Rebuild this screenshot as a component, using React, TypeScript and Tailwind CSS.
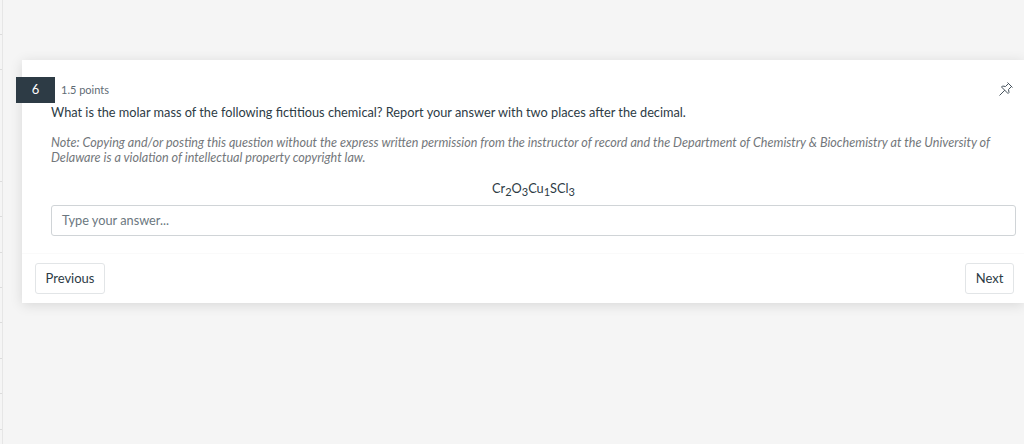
const stripRows = [35, 35, 112, 35, 36, 35, 35, 36, 35, 36]

function PinIcon() {
    return (
        <svg viewBox="0 0 16 16" fill="none" stroke="#46525c" strokeWidth="1" className="absolute right-[10px] top-[21px] h-[16px] w-[16px]">
            <path d="M9.5 1.5 14.5 6.5" />
            <path d="M10.5 2.5 7.5 5.5 4.5 5 3.5 6 10 12.5 11 11.5 10.5 8.5 13.5 5.5" />
            <path d="M6.8 9.2 1.5 14.5" />
        </svg>
    )
}

export default function App() {
    return (
        <div className="flex h-[444px] overflow-hidden bg-[#f5f5f5] font-['Lato',sans-serif] text-[#2d3b45]">
            {/* Left strip of the page behind */}
            <div className="w-[3px] shrink-0 border-r border-[#e6e6e6]">
                {stripRows.map((h, i) => (
                    <div key={i} className="border-b border-[#dcdcdc]" style={{ height: h }} />
                ))}
            </div>

            <div className="flex-1 pt-[60px] pl-[19px]">
                {/* Question card */}
                <div className="relative h-[243px] bg-white shadow-[0_2px_12px_rgba(0,0,0,0.12)]">
                    <div className="absolute left-[-6px] top-[17px] flex h-[26px] w-[39px] items-center justify-center bg-[#2d3b45] text-[13px] text-white">
                        6
                    </div>
                    <PinIcon />

                    <div className="pt-[23px] pl-[29px] pr-[8px]">
                        <div className="pl-[10px] text-[11px] leading-[14px] text-[#5f6b75]">1.5 points</div>
                        <p className="mt-[7px] text-[12.75px] leading-[16px]">
                            What is the molar mass of the following fictitious chemical? Report your answer with two places after the decimal.
                        </p>
                        <p className="mt-[15px] pr-[16px] text-[12.58px] leading-[15px] italic text-[#73777b]">
                            Note: Copying and/or posting this question without the express written permission from the instructor of record and the Department of Chemistry &amp; Biochemistry at the University of Delaware is a violation of intellectual property copyright law.
                        </p>
                        <p className="mt-[14px] text-center text-[12.75px] leading-[18px] text-[#2d3b45]">
                            Cr<sub className="text-[11px]">2</sub>O<sub className="text-[11px]">3</sub>Cu<sub className="text-[11px]">1</sub>SCl<sub className="text-[11px]">3</sub>
                        </p>
                        <div className="mt-[8px] flex h-[31px] items-center rounded-[3px] border border-[#d0d4d7] px-[10px] text-[12.75px] text-[#6b7780]">
                            Type your answer...
                        </div>
                    </div>

                    {/* Footer buttons */}
                    <div className="mt-[17px] flex justify-between border-t border-[#fafafa] pt-[9px] pr-[10px] pl-[13px]">
                        <button className="h-[31px] w-[70px] rounded-[3px] border border-[#e2e5e7] text-[13px]">Previous</button>
                        <button className="h-[31px] w-[49px] rounded-[3px] border border-[#e2e5e7] text-[13px]">Next</button>
                    </div>
                </div>
            </div>
        </div>
    )
}
